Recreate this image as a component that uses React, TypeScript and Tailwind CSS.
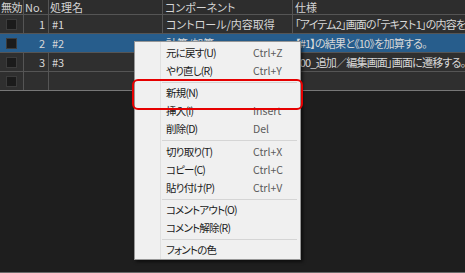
import React from 'react';

const rows = [
  { no: 1, name: '#1', comp: 'コントロール/内容取得', spec: '「アイテム2」画面の「テキスト1」の内容を取得する。', selected: false },
  { no: 2, name: '#2', comp: '計算/加算', spec: '【#1】の結果と《10》を加算する。', selected: true },
  { no: 3, name: '#3', comp: '画面/遷移', spec: '「00_追加／編集画面」画面に遷移する。', selected: false },
];

type MenuEntry = { label: string; shortcut?: string } | 'sep' | 'sep5';

const menu: MenuEntry[] = [
  { label: '元に戻す(U)', shortcut: 'Ctrl+Z' },
  { label: 'やり直し(R)', shortcut: 'Ctrl+Y' },
  'sep',
  { label: '新規(N)' },
  { label: '挿入(I)', shortcut: 'Insert' },
  { label: '削除(D)', shortcut: 'Del' },
  'sep5',
  { label: '切り取り(T)', shortcut: 'Ctrl+X' },
  { label: 'コピー(C)', shortcut: 'Ctrl+C' },
  { label: '貼り付け(P)', shortcut: 'Ctrl+V' },
  'sep',
  { label: 'コメントアウト(O)' },
  { label: 'コメント解除(R)' },
  'sep',
  { label: 'フォントの色' },
];

const Checkbox = () => (
  <div className="w-[11px] h-[11px] bg-[#1b1b1b] border border-[#3c3c3c]" />
);

export default function App() {
  return (
    <div className="relative w-[465px] h-[273px] bg-[#1e1e1e] overflow-hidden font-['Noto_Sans_CJK_JP',sans-serif] text-[11px] leading-none [font-feature-settings:'palt']">
      {/* grid */}
      <div className="flex flex-col">
        <div className="flex h-[15px] bg-[#2d2d2d] text-[#d4d4d4] border-b border-[#555] whitespace-nowrap">
          <div className="w-[24px] border-r border-[#555] pl-[1px] flex items-center overflow-hidden tracking-[-0.5px]">無効</div>
          <div className="w-[25px] border-r border-[#555] pl-[1px] flex items-center">No.</div>
          <div className="w-[114px] border-r border-[#555] pl-[1px] flex items-center">処理名</div>
          <div className="w-[130px] border-r border-[#555] pl-[2px] flex items-center">コンポーネント</div>
          <div className="flex-1 pl-[2px] flex items-center">仕様</div>
        </div>
        {rows.map((r) => (
          <div
            key={r.no}
            className={`flex h-[19px] border-b border-[#555] text-[#d8d8d8] ${r.selected ? 'bg-[#275d8c]' : 'bg-[#2f2f2f]'}`}
          >
            <div className={`w-[24px] border-r flex items-center justify-center ${r.selected ? 'border-[#275d8c]' : 'border-[#555]'}`}>
              <Checkbox />
            </div>
            <div className={`w-[25px] border-r flex items-center justify-end pr-[3px] ${r.selected ? 'border-[#275d8c]' : 'border-[#555]'}`}>{r.no}</div>
            <div className={`w-[114px] border-r flex items-center pl-[3px] ${r.selected ? 'border-[#275d8c]' : 'border-[#555]'}`}>{r.name}</div>
            <div className={`w-[130px] border-r flex items-center pl-[3px] whitespace-nowrap overflow-hidden ${r.selected ? 'border-[#275d8c]' : 'border-[#555]'}`}>{r.comp}</div>
            <div className="flex-1 flex items-center pl-[2px] whitespace-nowrap overflow-hidden tracking-[-0.8px]">{r.spec}</div>
          </div>
        ))}
        <div className="flex h-[19px] border-b border-[#777] bg-[#2f2f2f]">
          <div className="w-[24px] border-r border-[#555] flex items-center justify-center">
            <Checkbox />
          </div>
          <div className="w-[25px] border-r border-[#555]" />
          <div className="w-[114px] border-r border-[#555]" />
          <div className="w-[130px] border-r border-[#555]" />
          <div className="flex-1" />
        </div>
      </div>

      {/* context menu */}
      <div className="absolute left-[134px] top-[41px] w-[167px] h-[219px] bg-[#f0f0f0] border border-[#979797] shadow-[2px_2px_3px_rgba(0,0,0,0.55)] flex">
        <div className="w-[26px] border-r border-[#e0e0e0]" />
        <div className="flex-1 flex flex-col pt-[2px] text-[#1a1a1a]">
          {menu.map((m, i) =>
            m === 'sep' || m === 'sep5' ? (
              <div key={i} className={`${m === 'sep5' ? 'h-[5px]' : 'h-[4px]'} flex items-center pl-[1px] pr-[3px]`}>
                <div className="w-full border-t border-[#d5d5d5]" />
              </div>
            ) : (
              <div key={i} className="h-[18px] flex items-center pl-[5px]">
                <span className="w-[87px] whitespace-nowrap text-[10.5px] tracking-[-0.8px]">{m.label}</span>
                {m.shortcut && <span className="text-[#5c5c5c] text-[10.5px] whitespace-nowrap">{m.shortcut}</span>}
              </div>
            )
          )}
        </div>
      </div>

      {/* highlight */}
      <div className="absolute left-[132px] top-[79px] w-[171px] h-[31px] border-2 border-[#e60000] rounded-[6px]" />

      <div className="absolute left-0 bottom-0 w-full h-[1px] bg-[#6a6a6a]" />
    </div>
  );
}
